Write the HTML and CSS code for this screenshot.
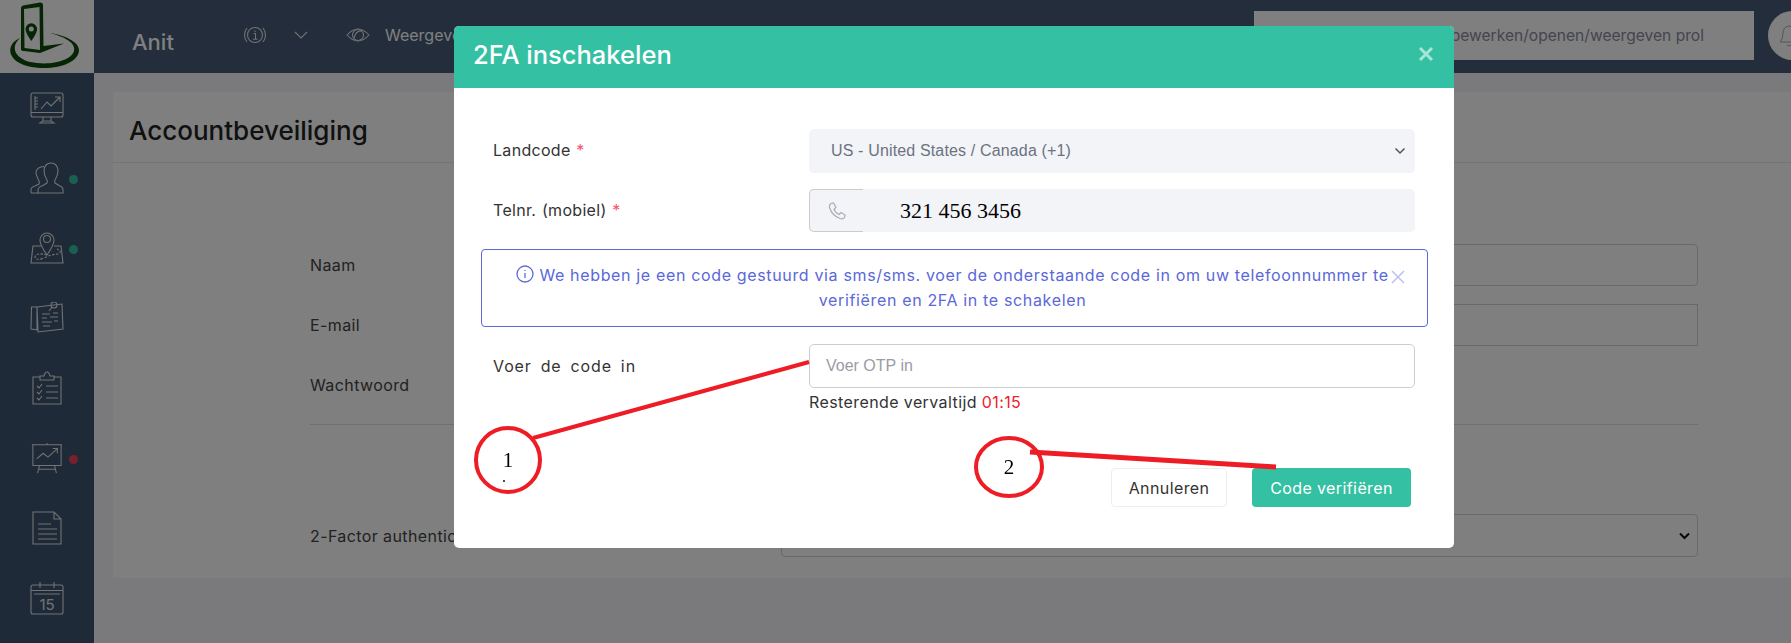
FILE: index.html
```html
<!DOCTYPE html>
<html lang="nl">
<head>
  <meta charset="UTF-8">
  <title>Accountbeveiliging</title>
  <link rel="stylesheet" href="styles.css">
</head>
<body>
  <div class="app">

    <!-- Sidebar -->
    <div class="sidebar">
      <div class="logo">
        <svg width="94" height="73" viewBox="0 0 94 73">
          <path d="M21 49 L21 8 Q21 6 23 5.500 L40 2.500 Q43 2.500 43 5 L43.500 46 L64 43.500 L40 53 L24 51 Q21 51 21 49 Z M24 9 L24.500 48 L40 50 L39.500 7 Z" fill="#0b4a0b" fill-rule="evenodd"/>
          <path d="M25.500 29 a5.800 5.800 0 0 1 11.600 0 q0 4 -5.800 12 q-5.800 -8 -5.800 -12 Z M28.800 29 a2.500 2.500 0 0 0 5 0 a2.500 2.500 0 0 0 -5 0 Z" fill="#0b4a0b" fill-rule="evenodd"/>
          <path d="M20 38 C6 44 6 60 27 66 C52 72 79 64 79 50 C79 43 68 36 50 33 C65 37 76 43 74 51 C71 61 50 66 30 62 C15 58 10 47 20 38 Z" fill="#0b4a0b"/>
        </svg>
      </div>
      <div class="nav-item">
        <svg class="nav-icon" viewBox="0 0 34 32"><rect x="1" y="1" width="32" height="24" rx="2"/><path d="M1 20.500 H33 M13 25 V29 M21 25 V29 M10 31 H24 L21 29 H13 Z M5 4 V18 M5 6 H8 M5 9 H8 M5 12 H8 M5 15 H8 M11 17 L17 10 L21 14 L30 5 M25 5 H30 V10"/></svg>
      </div>
      <div class="nav-item">
        <svg class="nav-icon" viewBox="0 0 34 32"><path d="M8 31 V28 Q8 25 12 24 L17 21 Q18 19 16.500 17 Q14 13 14 8 Q15 1 21 1 Q27 1 28 8 Q28 13 25.500 17 Q24 19 25 21 L30 24 Q33 25 33 28 V31 Z"/><path d="M1 31 H8 M1 31 V28 Q1 25 5 24 L9 22 Q10 20 8 17 Q6 13 6 10 Q7 5 14 4.500"/></svg>
        <span class="dot dot-green"></span>
      </div>
      <div class="nav-item">
        <svg class="nav-icon" viewBox="0 0 34 32"><path d="M11 14 H3 L1 31 H33 L31 14 H24"/><path d="M17 23 Q10 13 10 8 a7 7 0 0 1 14 0 Q24 13 17 23 Z"/><circle cx="17" cy="7" r="3.500"/><path class="dashed" d="M17 23 Q6 20 5 25 Q6 29 14 26 Q22 22 29 22 Q32 19 27 17"/></svg>
        <span class="dot dot-green"></span>
      </div>
      <div class="nav-item">
        <svg class="nav-icon" viewBox="0 0 34 32"><path d="M7 5 H1.500 L1 27 L8 28"/><path d="M7 5 L32 2 L33 27 L8 30 Z M7 5 V28"/><circle cx="24" cy="3" r="3"/><path d="M22 5 L19 9 M12 12 H20 M23 11 H28 M12 16 H17 M20 15 H28 M12 20 H22 M24 19 H28 M13 24 H20"/></svg>
      </div>
      <div class="nav-item">
        <svg class="nav-icon nav-icon-tall" viewBox="0 0 34 34"><path d="M10 6 H3 V33 H31 V6 H24"/><path d="M10 9 V5 H14 Q15 1 17 1 Q19 1 20 5 H24 V9 Z"/><path d="M7 15 L9 17 L12 13 M16 15 H28 M7 21 L9 23 L12 19 M16 21 H28 M7 27 L9 29 L12 25 M16 27 H28"/></svg>
      </div>
      <div class="nav-item">
        <svg class="nav-icon" viewBox="0 0 34 34"><path d="M1 3 H33 M2 3 V25 H32 V3 M17 1 V3 M9 25 L7 33 M25 25 L27 33 M8 29 H26 M6 18 L13 12 L18 16 L28 7 M23 7 H28 V12"/></svg>
        <span class="dot dot-red"></span>
      </div>
      <div class="nav-item">
        <svg class="nav-icon nav-icon-tall" viewBox="0 0 34 34"><path d="M3 1 H24 L31 8 V33 H3 Z M24 1 V8 H31 M8 13 H21 M8 18 H27 M8 23 H27 M8 28 H27"/></svg>
      </div>
      <div class="nav-item">
        <svg class="nav-icon nav-icon-tall" viewBox="0 0 34 34"><rect x="1" y="4" width="32" height="29" rx="2"/><path d="M1 9.500 H33 M4 13 H30 M10 1 V7 M24 1 V7"/><text x="17" y="29" class="cal-day">15</text></svg>
      </div>
    </div>

    <!-- Main -->
    <div class="main">
      <div class="topbar">
        <div class="brand">Anit</div>
        <svg class="top-icon" width="24" height="24" viewBox="0 0 24 24"><circle cx="12" cy="12" r="7.500"/><path d="M4 5 a11 11 0 0 0 0 14 M20 5 a11 11 0 0 1 0 14 M12 7.500 V9 M10.500 10.500 H12.500 V16 M10 16.200 H14.500"/></svg>
        <svg class="top-icon chevron" width="14" height="8" viewBox="0 0 14 8"><path d="M1 1 L7 7 L13 1"/></svg>
        <svg class="top-icon eye" width="24" height="16" viewBox="0 0 24 16"><path d="M1 8 Q12 -4 23 8 Q12 20 1 8 Z"/><circle cx="12" cy="8" r="5.500"/><path d="M8 11 Q10 3 16 4"/></svg>
        <div class="top-link">Weergeven</div>
        <div class="search">
          <span class="search-dot"></span>
          <span class="search-text">Zoek om te bewerken/openen/weergeven prol</span>
        </div>
        <div class="bell">
          <svg width="24" height="26" viewBox="0 0 24 26"><path d="M3 19 Q6 16 6 10 Q6 4 12 3 Q18 4 18 10 Q18 16 21 19 Z M10 22 Q12 24 14 22"/></svg>
        </div>
      </div>

      <div class="content">
        <div class="card">
          <div class="card-header"><h2>Accountbeveiliging</h2></div>
          <div class="card-body">
            <div class="form-row"><label>Naam</label><input class="page-input" type="text"></div>
            <div class="form-row"><label>E-mail</label><input class="page-input square" type="text"></div>
            <div class="form-row"><label>Wachtwoord</label></div>
            <hr class="divider">
            <div class="form-row"><label>2-Factor authenticatie</label>
              <div class="page-input page-select">
                <svg width="11" height="8" viewBox="0 0 11 8"><path d="M1 1.500 L5.500 6 L10 1.500"/></svg>
              </div>
            </div>
          </div>
        </div>
      </div>
    </div>
  </div>

  <div class="backdrop"></div>

  <!-- 2FA modal -->
  <div class="modal">
    <div class="modal-header">
      <h3>2FA inschakelen</h3>
      <svg class="modal-close" width="16" height="16" viewBox="0 0 16 16"><path d="M2 2 L14 14 M14 2 L2 14"/></svg>
    </div>
    <div class="modal-body">
      <div class="field-row">
        <label>Landcode <span class="req">*</span></label>
        <div class="select-box">
          <span>US - United States / Canada (+1)</span>
          <svg width="12" height="8" viewBox="0 0 12 8"><path d="M1.500 1.500 L6 6 L10.500 1.500"/></svg>
        </div>
      </div>
      <div class="field-row">
        <label>Telnr. (mobiel) <span class="req">*</span></label>
        <div class="phone-group">
          <div class="phone-addon">
            <svg width="18" height="18" viewBox="0 0 18 18"><path d="M3 1.500 L5.500 1 L8 5.500 L6 7.500 Q7.500 11 11 12.500 L13 10.500 L17 13 L16.500 15.500 Q15 17.500 12 16.500 Q4 13.500 1.500 5.500 Q1 3 3 1.500 Z"/></svg>
          </div>
          <div class="phone-number">321 456 3456</div>
        </div>
      </div>
      <div class="alert">
        <svg class="alert-icon" width="18" height="18" viewBox="0 0 18 18"><circle cx="9" cy="9" r="8"/><path d="M9 8 V13 M9 5 V6"/></svg>
        We hebben je een code gestuurd via sms/sms. voer de onderstaande code in om uw telefoonnummer te<br>
        verifiëren en 2FA in te schakelen
        <svg class="alert-close" width="14" height="14" viewBox="0 0 14 14"><path d="M1 1 L13 13 M13 1 L1 13"/></svg>
      </div>
      <div class="field-row">
        <label class="label-plain">Voer de code in</label>
        <input class="otp-input" type="text" placeholder="Voer OTP in">
      </div>
      <div class="hint-row">
        <span></span>
        <div class="hint">Resterende vervaltijd <span class="timer">01:15</span></div>
      </div>
      <div class="modal-footer">
        <button class="btn btn-light">Annuleren</button>
        <button class="btn btn-teal">Code verifiëren</button>
      </div>
    </div>
  </div>

  <!-- Hand drawn notes on top of the screenshot -->
  <svg class="notes" width="1791" height="643" viewBox="0 0 1791 643">
    <circle class="note-line" cx="508" cy="460" r="32"/>
    <path class="note-line" d="M533 438 L809 362"/>
    <ellipse class="note-line" cx="1009" cy="467" rx="33" ry="29"/>
    <path class="note-line note-thick" d="M1030 452 L1276 467"/>
    <text class="note-text" x="508" y="467">1</text>
    <text class="note-text" x="1009" y="474">2</text>
    <circle cx="504" cy="481" r="1" fill="#111"/>
  </svg>
</body>
</html>
```

FILE: styles.css
```css
body {
  font-family: Inter, "Liberation Sans", sans-serif;
  margin: 0;
  padding: 0;
  height: 643px;
  overflow: hidden;
  background-color: #f4f4f8;
}

.app {
  display: flex;
  height: 643px;
}

/* sidebar */
.sidebar {
  width: 94px;
  flex-shrink: 0;
  background-color: #3e5470;
}

.logo {
  height: 73px;
  background-color: #fff;
}

.logo svg {
  display: block;
}

.nav-item {
  position: relative;
  height: 70px;
  display: flex;
  align-items: center;
  justify-content: center;
  box-sizing: border-box;
}

.nav-icon {
  width: 34px;
  height: 32px;
  fill: none;
  stroke: #e4e4e6;
  stroke-width: 1.1;
}

.nav-icon-tall {
  height: 34px;
}

.dashed {
  stroke-dasharray: 2.500 1.500;
}

.cal-day {
  fill: #e4e4e6;
  stroke: none;
  font-size: 15px;
  text-anchor: middle;
}

.dot {
  position: absolute;
  left: 69px;
  top: 32px;
  width: 9px;
  height: 9px;
  border-radius: 50%;
}

.dot-green {
  background-color: #34c0a2;
}

.dot-red {
  background-color: #f0405c;
}

/* topbar */
.main {
  flex: 1;
  min-width: 0;
}

.topbar {
  height: 73px;
  box-sizing: border-box;
  display: flex;
  align-items: center;
  padding-left: 38px;
  background-color: #465a76;
}

.brand {
  width: 111px;
  margin-top: 11px;
  font-size: 22px;
  font-weight: 500;
  color: #fff;
}

.top-icon {
  margin-top: -3px;
  fill: none;
  stroke: #e4e4e6;
  stroke-width: 1.1;
}

.chevron {
  margin-left: 27px;
}

.eye {
  margin-left: 38px;
}

.top-link {
  width: 60px;
  margin-left: 15px;
  margin-top: -3px;
  font-size: 16px;
  color: #fff;
  white-space: nowrap;
}

.search {
  position: absolute;
  left: 1254px;
  top: 11px;
  width: 500px;
  height: 49px;
  box-sizing: border-box;
  display: flex;
  align-items: center;
  padding: 0 50px 0 16px;
  background-color: #fff;
  overflow: hidden;
}

.search-dot {
  width: 12px;
  height: 12px;
  border: 1px solid #888;
  border-radius: 50%;
  flex-shrink: 0;
}

.search-text {
  margin-left: auto;
  font-size: 15.600px;
  color: #8a8aa0;
  white-space: nowrap;
}

.bell {
  position: absolute;
  left: 1768px;
  top: 11px;
  width: 49px;
  height: 49px;
  border-radius: 50%;
  background-color: #fff;
  display: flex;
  align-items: center;
  padding-left: 9px;
  box-sizing: border-box;
}

.bell svg {
  fill: none;
  stroke: #aaa;
}

/* page behind the modal */
.content {
  padding: 19px 0 0 19px;
}

.card {
  background-color: white;
  height: 486px;
}

.card-header {
  height: 71px;
  box-sizing: border-box;
  border-bottom: 1px solid #e8e8ea;
  padding: 6px 0 0 16px;
  display: flex;
  align-items: center;
}

.card-header h2 {
  margin: 0;
  font-size: 26px;
  font-weight: 500;
  color: #222;
}

.card-body {
  padding: 81px 93px 0 197px;
}

.form-row {
  display: grid;
  grid-template-columns: 471px 1fr;
  align-items: center;
  height: 42px;
  margin-bottom: 18px;
}

.form-row label {
  font-size: 16px;
  letter-spacing: 0.4px;
  color: #444;
  white-space: nowrap;
}

.page-input {
  height: 42px;
  box-sizing: border-box;
  border: 1px solid #ced4da;
  border-radius: 4px;
  background-color: #fff;
}

.square {
  border-radius: 0;
}

.page-select {
  height: 43px;
  display: flex;
  align-items: center;
  justify-content: flex-end;
  padding-right: 7px;
}

.page-select svg {
  fill: none;
  stroke: #111;
  stroke-width: 2;
}

.divider {
  border: none;
  border-top: 1px solid #dfdfe2;
  margin: 0 0 89px;
}

.backdrop {
  position: fixed;
  top: 0;
  left: 0;
  right: 0;
  bottom: 0;
  background-color: rgba(0, 0, 0, 0.5);
}

/* modal */
.modal {
  position: fixed;
  left: 454px;
  top: 26px;
  width: 1000px;
  height: 522px;
  background-color: white;
  border-radius: 5px;
  overflow: hidden;
}

.modal-header {
  height: 62px;
  box-sizing: border-box;
  display: flex;
  align-items: center;
  justify-content: space-between;
  padding: 0 20px 6px 19px;
  background-color: #34c0a2;
}

.modal-header h3 {
  margin: 0;
  font-size: 25.500px;
  font-weight: 500;
  color: white;
}

.modal-close {
  margin-right: 0;
  fill: none;
  stroke: #a6e6d7;
  stroke-width: 3;
}

.modal-body {
  padding: 41px 39px 0 40px;
}

.field-row {
  display: grid;
  grid-template-columns: 315px 1fr;
  align-items: center;
  margin-bottom: 16px;
}

.field-row label {
  font-size: 16px;
  letter-spacing: 0.3px;
  word-spacing: 1px;
  color: #333;
  margin: -2px 0 0 -1px;
}

.field-row .label-plain {
  margin-top: 0;
  word-spacing: 3.500px;
  letter-spacing: 0.9px;
}

.req {
  color: #f1556c;
}

.select-box {
  height: 44px;
  box-sizing: border-box;
  display: flex;
  align-items: center;
  justify-content: space-between;
  padding: 0 9px 0 22px;
  background-color: #f3f4f8;
  border-radius: 5px;
  font-family: "Liberation Sans", sans-serif;
  font-size: 16px;
  letter-spacing: 0.15px;
  color: #6b7280;
}

.select-box svg {
  fill: none;
  stroke: #555;
  stroke-width: 1.500;
}

.phone-group {
  display: flex;
  height: 43px;
  background-color: #f3f4f8;
  border-radius: 5px;
}

.phone-addon {
  width: 54px;
  box-sizing: border-box;
  border: 1px solid #ccc;
  border-right: none;
  border-radius: 5px 0 0 5px;
  display: flex;
  align-items: center;
  padding-left: 18px;
}

.phone-addon svg {
  fill: none;
  stroke: #a9abb8;
  stroke-width: 1.200;
}

.phone-number {
  padding: 9px 0 0 37px;
  font-family: "Liberation Serif", serif;
  font-size: 22px;
  color: black;
}

.alert {
  position: relative;
  margin: 17px -13px 17px -13px;
  height: 78px;
  box-sizing: border-box;
  padding: 13px 34px 0 30px;
  border: 1px solid #5a68d8;
  border-radius: 4px;
  text-align: center;
  font-size: 16px;
  letter-spacing: 0.650px;
  line-height: 25px;
  color: #5a68d8;
  white-space: nowrap;
}

.alert-icon {
  vertical-align: -2px;
  fill: none;
  stroke: #5a68d8;
  stroke-width: 1.300;
}

.alert-close {
  position: absolute;
  right: 22px;
  top: 20px;
  fill: none;
  stroke: #bcc1f0;
  stroke-width: 1.500;
}

.otp-input {
  height: 44px;
  box-sizing: border-box;
  padding: 0 16px;
  border: 1px solid #ccc;
  border-radius: 5px;
  font-family: "Liberation Sans", sans-serif;
  font-size: 16px;
}

.otp-input::placeholder {
  color: #9a9ca5;
}

.hint-row {
  display: grid;
  grid-template-columns: 315px 1fr;
  margin-top: -13px;
}

.hint {
  font-size: 16px;
  letter-spacing: 0.4px;
  line-height: 22px;
  color: #333;
}

.timer {
  color: #f1202c;
}

.modal-footer {
  display: flex;
  justify-content: flex-end;
  gap: 25px;
  margin-top: 55px;
  padding-right: 4px;
}

.btn {
  height: 39px;
  box-sizing: border-box;
  border-radius: 4px;
  font-family: Inter, sans-serif;
  font-size: 16px;
  letter-spacing: 0.4px;
  cursor: pointer;
}

.btn-light {
  width: 116px;
  background-color: white;
  border: 1px solid #eee;
  color: #333;
}

.btn-teal {
  width: 159px;
  background-color: #34c0a2;
  border: none;
  color: white;
}

/* annotations */
.notes {
  position: fixed;
  top: 0;
  left: 0;
}

.note-line {
  fill: none;
  stroke: #ee1c25;
  stroke-width: 4;
}

.note-thick {
  stroke-width: 5;
}

.note-text {
  font-family: "Liberation Serif", serif;
  font-size: 21px;
  text-anchor: middle;
  fill: black;
}
```
